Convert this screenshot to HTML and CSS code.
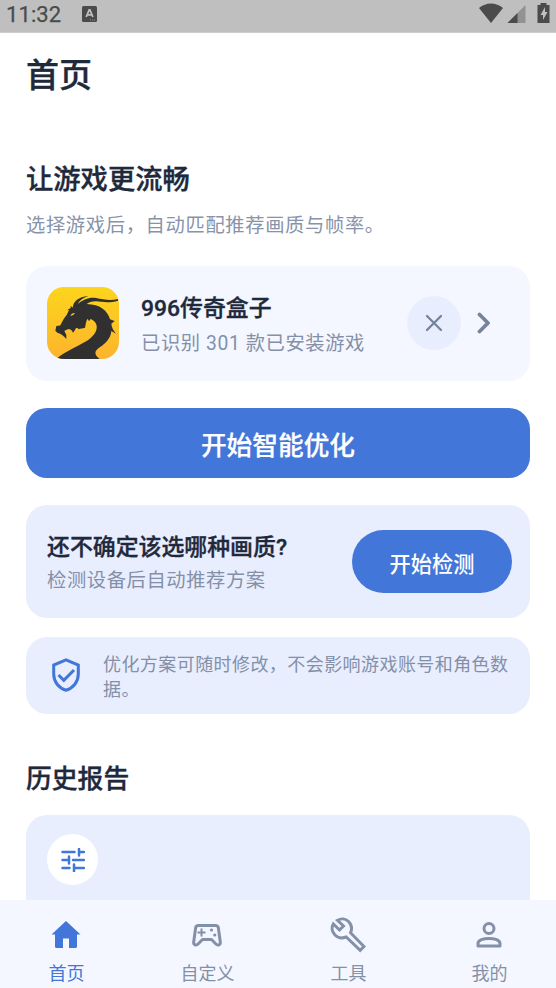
FILE: index.html
```html
<!DOCTYPE html>
<html lang="zh-CN">
<head>
<meta charset="utf-8">
<meta name="viewport" content="width=device-width">
<title>首页</title>
<link rel="stylesheet" href="styles.css">
</head>
<body>
<div class="app">
  <header class="status">
    <span class="clock">11:32</span>
    <svg class="notice-icon" viewBox="0 0 15 16"><rect width="15" height="16" rx="1.5" fill="#4b4b4b"/><path d="M4.2 11 7.2 4h.7l3 7M5.5 8.8h4" fill="none" stroke="#c0c0c0" stroke-width="1.8"/><path d="M8 14h5" stroke="#929292" stroke-dasharray="1 1"/></svg>
    <svg class="signals" viewBox="0 0 76 24"><path d="M0 5C7-1 17-1 24 5L12 20Z" fill="#4b4b4b"/><path d="M28.500 20 46.500 2V20Z" fill="#929292"/><path d="M28.500 20 38.500 10V20Z" fill="#4b4b4b"/><path d="M58.500 2h3V0h6v2h3v18h-12Z" fill="#4b4b4b"/><path d="M66 4 61.500 12H64v5l4.500-8H66Z" fill="#c0c0c0"/></svg>
  </header>
  <main class="content">
    <h1 class="page-title">首页</h1>
    <h2 class="headline">让游戏更流畅</h2>
    <p class="lead">选择游戏后，自动匹配推荐画质与帧率。</p>
    <section class="card game">
      <svg class="game-icon" viewBox="81 81 216 216">
        <defs><linearGradient id="gold" x2="0" y2="1"><stop stop-color="#fcd51c"/><stop offset="1" stop-color="#fdb42d"/></linearGradient></defs>
        <rect x="81" y="81" width="216" height="216" fill="url(#gold)"/>
        <path fill="#303030" d="M108 297C140 272 175 258 200 243C222 228 232 212 230 197C228 187 220 180 212 177L207 184L203 176C197 184 198 193 195 203C188 206 181 204 176 208C174 204 171 203 168 204C165 210 163 214 159 218C156 211 152 208 147 207C142 208 137 210 133 213L139 225V237C132 227 124 222 112 218L106 212L109 198C116 196 119 198 122 194C128 182 132 174 140 165L147 150L141 151L152 144V137L158 143C160 124 175 111 205 108C190 114 178 121 173 132C188 119 210 110 228 114C250 118 270 123 294 117V122C270 130 245 126 228 124C215 124 205 128 200 132C240 133 262 151 270 178L284 183L274 191C275 203 280 211 288 221L274 213C272 233 260 247 245 258C225 270 218 280 239 297Z"/>
        <path d="M151 168Q155 158 165 159Q161 167 151 168Z" fill="#fdc822"/>
      </svg>
      <div class="game-text">
        <h3 class="item-title">996传奇盒子</h3>
        <p class="item-sub">已识别 301 款已安装游戏</p>
      </div>
      <button class="clear" aria-label="清除"><svg viewBox="0 0 18 18"><path d="m2 2 14 14M16 2 2 16"/></svg></button>
      <svg class="chevron" viewBox="0 0 14 22"><path d="m2.500 2.500 8.500 8.500-8.500 8.500"/></svg>
    </section>
    <button class="primary">开始智能优化</button>
    <section class="card detect">
      <div class="detect-text">
        <h3 class="item-title">还不确定该选哪种画质?</h3>
        <p class="item-sub">检测设备后自动推荐方案</p>
      </div>
      <button class="pill">开始检测</button>
    </section>
    <section class="card tip">
      <svg class="shield" viewBox="0 0 28 34"><path d="M14 1.800 26.300 7v9c0 7.700-5 14.200-12.300 16.200C6.700 30.200 1.700 23.700 1.700 16V7Z"/><path d="m6.500 17 5.300 5.300L22 12"/></svg>
      <p class="tip-text">优化方案可随时修改，不会影响游戏账号和角色数据。</p>
    </section>
    <h2 class="section-title">历史报告</h2>
    <section class="card report">
      <span class="report-icon"><svg viewBox="0 0 24 24"><path d="M1.500 4h12M18 4h5M18 1v6.500M1.500 12H8M8 8.500v7M12 12h11M1.500 20h7M13 20h10M13 16.500v7"/></svg></span>
    </section>
  </main>
  <nav class="tabs">
    <a class="tab active"><svg viewBox="0 0 36 36"><path fill="currentColor" d="M18 4 32.500 17.500H29v12q0 1.500-1.500 1.500H21V21.500h-6V31H8.500Q7 31 7 29.500v-12H3.500Z"/></svg><span>首页</span></a>
    <a class="tab"><svg viewBox="0 0 36 36"><path class="line" d="M9.500 8.500h17q2.500 0 2.900 2.500l1.900 14c.4 2.800-2.500 3.900-4.400 2l-4.400-4.500h-9L9.100 27c-1.900 1.900-4.800.8-4.400-2l1.900-14q.4-2.500 2.900-2.500Z"/><path class="thin" d="M12.500 11.500v8M8.500 15.500h8"/><circle cx="22.500" cy="13" r="1.600"/><circle cx="25.800" cy="18" r="1.600"/></svg><span>自定义</span></a>
    <a class="tab"><svg viewBox="0 0 36 36"><path class="line wrench" d="M7.500 3.300C11 1.300 15.500 1.500 18.500 4.500s3.700 7.500 2 11.300L34 29.500 30.200 33.300 16.200 20C12.500 21.500 8 21 5 18S1.300 10.500 3.300 7L9.500 13 13.500 9Z"/></svg><span>工具</span></a>
    <a class="tab"><svg viewBox="0 0 36 36"><circle class="line" cx="18" cy="11.500" r="5"/><path class="line" d="M7 29V26.500C7 19.700 29 19.700 29 26.500V29Z"/></svg><span>我的</span></a>
  </nav>
</div>
</body>
</html>
```
FILE: styles.css
```css
* { box-sizing: border-box; }
body, h1, h2, h3, p { margin: 0; }
body {
  background: #fff;
  color: #1e293b;
  font-family: Roboto, "Noto Sans CJK SC", sans-serif;
}
button { border: 0; padding: 0; font: inherit; }
svg { display: block; flex: none; }
h1, h2, h3 { font-weight: 500; -webkit-text-stroke: .35px currentColor; }

.app { height: 988px; display: flex; flex-direction: column; overflow: hidden; }
.status {
  flex: none; height: 33px; padding: 0 0 0 6px;
  display: flex; align-items: flex-start;
  background: #bfbfbf; color: #4b4b4b;
  border-bottom: 1px solid #cdcdcd;
}
.clock { width: 76px; font-size: 22px; line-height: 30px; letter-spacing: .1px; -webkit-text-stroke: .25px currentColor; }
.notice-icon { width: 15px; height: 16px; margin-top: 6px; }
.signals { width: 76px; height: 24px; margin: 3px 1px 0 auto; }

.content { flex: 1; min-height: 0; padding: 0 26px; overflow: hidden; display: flex; flex-direction: column; }
.content > * { flex: none; }
.page-title { font-size: 33px; line-height: 40px; margin-top: 23px; }
.headline { font-size: 27.3px; line-height: 36px; margin-top: 66px; }
.lead { font-size: 19.3px; letter-spacing: .65px; line-height: 28px; margin-top: 14px; color: #8793aa; }

.card { border-radius: 21px; background: #e9eeff; display: flex; align-items: center; }
.game { height: 115px; margin-top: 26px; padding: 0 39px 1px 21px; background: #f4f7ff; }
.game-icon { width: 72px; height: 72px; border-radius: 17px; }
.game-text { flex: 1; margin: 3px 0 0 22px; }
.item-title { font-size: 22.9px; line-height: 34px; white-space: nowrap; }
.item-sub { font-size: 19.3px; letter-spacing: .6px; line-height: 28px; margin-top: 4px; color: #8490a7; white-space: nowrap; }
.clear { width: 54px; height: 54px; border-radius: 50%; background: #e9eeff; display: grid; place-items: center; }
.clear svg { width: 18px; height: 18px; }
.clear path { fill: none; stroke: #76839a; stroke-width: 2.3; stroke-linecap: round; }
.chevron { width: 14px; height: 22px; margin-left: 16px; }
.chevron path { fill: none; stroke: #76839a; stroke-width: 3.8; stroke-linecap: round; stroke-linejoin: round; }

.primary { height: 70px; margin-top: 27px; padding-top: 1px; border-radius: 21px; background: #4276d9; color: #fff; font-size: 25.7px; font-weight: 500; -webkit-text-stroke: .25px currentColor; }
.detect { height: 113px; margin-top: 27px; padding: 0 18px 0 21px; justify-content: space-between; }
.detect-text { margin-top: 3px; }
.detect .item-sub { margin-top: 2px; }
.pill { width: 160px; height: 63px; padding-top: 2px; border-radius: 32px; background: #4276d9; color: #fff; font-size: 21.2px; font-weight: 500; }
.tip { height: 77px; margin-top: 19px; padding: 0 20px 0 26px; }
.shield { width: 28px; height: 34px; margin-top: -1px; }
.shield path { fill: none; stroke: #4276d9; stroke-width: 3; }
.tip-text { flex: 1; margin: 3px 0 0 23px; font-size: 18px; letter-spacing: .43px; line-height: 25px; color: #8490a7; }
.section-title { font-size: 25.8px; line-height: 36px; margin-top: 47px; }
.report { height: 140px; margin-top: 18px; padding: 19px 21px; align-items: flex-start; }
.report-icon { width: 51px; height: 51px; border-radius: 50%; background: #fff; display: grid; place-items: center; }
.report-icon svg { width: 24px; height: 24px; }
.report-icon path { fill: none; stroke: #4276d9; stroke-width: 2.5; stroke-linecap: round; }

.tabs { flex: none; height: 88px; display: grid; grid-template-columns: repeat(4, 1fr); column-gap: 8px; background: #f4f7ff; }
.tab { display: flex; flex-direction: column; align-items: center; padding-top: 17px; color: #8490a7; font-size: 18px; line-height: 26px; }
.tab.active { color: #4276d9; }
.tab svg { width: 36px; height: 36px; margin: 0 1px 8px 0; fill: currentColor; }
.tab .line { fill: none; stroke: currentColor; stroke-width: 3; stroke-linejoin: round; }
.tab .wrench { stroke-linejoin: miter; }
.tab .thin { fill: none; stroke: currentColor; stroke-width: 2; }
```
